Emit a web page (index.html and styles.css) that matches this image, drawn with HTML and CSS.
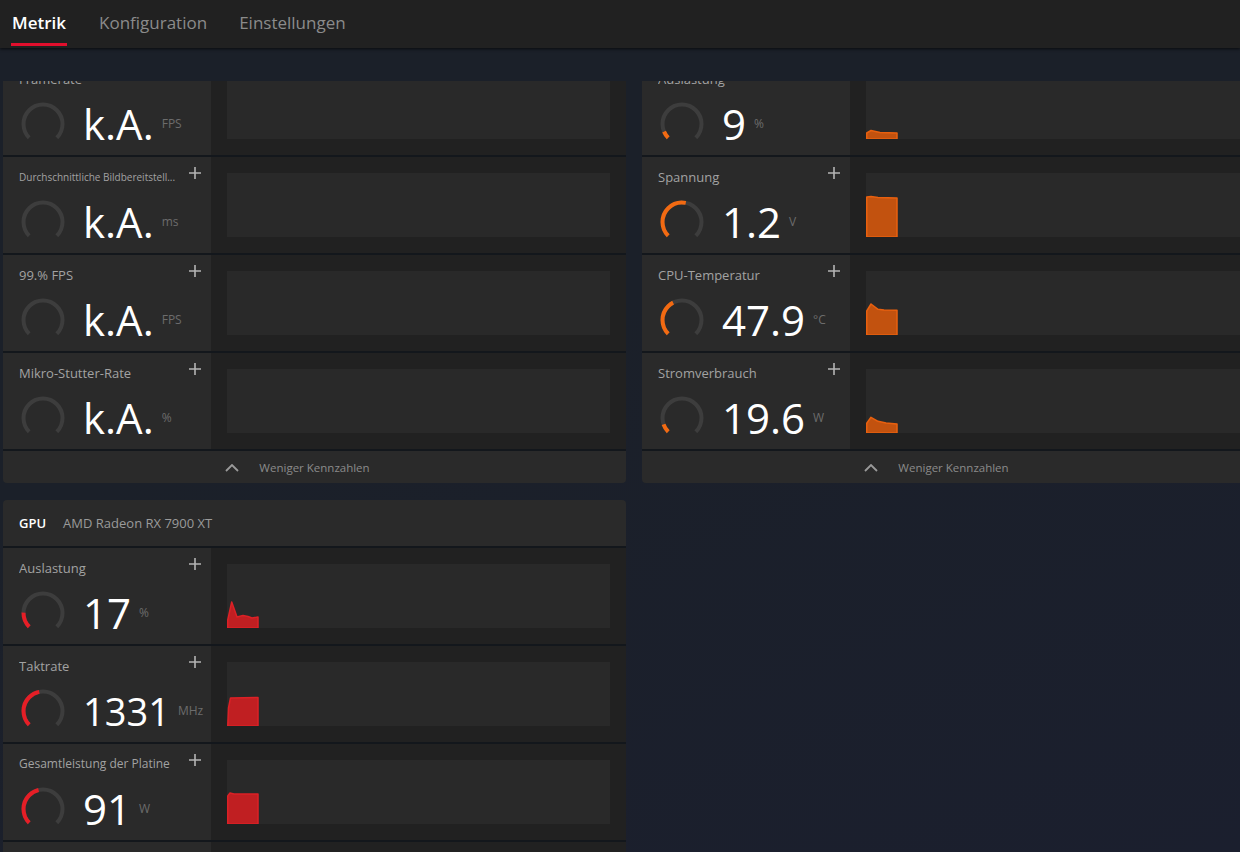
FILE: index.html
```html
<!DOCTYPE html>
<html lang="de">
<head>
<meta charset="utf-8">
<title>Metrik</title>
<link rel="stylesheet" href="styles.css">
</head>
<body>
<header class="topbar">
  <nav class="tabs">
    <a class="tab active">Metrik</a>
    <a class="tab">Konfiguration</a>
    <a class="tab">Einstellungen</a>
  </nav>
</header>

<main class="viewport">
  <div class="columns">
    <div class="col">
      <section class="panel">
        <div class="row">
          <div class="cell">
            <div class="label">Framerate</div>
            <svg class="plus" viewBox="0 0 12 12"><path d="M6 0V12M0 6H12"/></svg>
            <div class="body">
              <svg class="gauge" viewBox="0 0 44 44"><circle class="track" cx="22" cy="22" r="19.5" pathLength="360" transform="rotate(135 22 22)"/></svg>
              <span class="value">k.A.</span><span class="unit">FPS</span>
            </div>
          </div>
          <div class="chart-area"><div class="chart"></div></div>
        </div>
        <div class="row">
          <div class="cell">
            <div class="label small">Durchschnittliche Bildbereitstell...</div>
            <svg class="plus" viewBox="0 0 12 12"><path d="M6 0V12M0 6H12"/></svg>
            <div class="body">
              <svg class="gauge" viewBox="0 0 44 44"><circle class="track" cx="22" cy="22" r="19.5" pathLength="360" transform="rotate(135 22 22)"/></svg>
              <span class="value">k.A.</span><span class="unit">ms</span>
            </div>
          </div>
          <div class="chart-area"><div class="chart"></div></div>
        </div>
        <div class="row">
          <div class="cell">
            <div class="label">99.% FPS</div>
            <svg class="plus" viewBox="0 0 12 12"><path d="M6 0V12M0 6H12"/></svg>
            <div class="body">
              <svg class="gauge" viewBox="0 0 44 44"><circle class="track" cx="22" cy="22" r="19.5" pathLength="360" transform="rotate(135 22 22)"/></svg>
              <span class="value">k.A.</span><span class="unit">FPS</span>
            </div>
          </div>
          <div class="chart-area"><div class="chart"></div></div>
        </div>
        <div class="row">
          <div class="cell">
            <div class="label">Mikro-Stutter-Rate</div>
            <svg class="plus" viewBox="0 0 12 12"><path d="M6 0V12M0 6H12"/></svg>
            <div class="body">
              <svg class="gauge" viewBox="0 0 44 44"><circle class="track" cx="22" cy="22" r="19.5" pathLength="360" transform="rotate(135 22 22)"/></svg>
              <span class="value">k.A.</span><span class="unit">%</span>
            </div>
          </div>
          <div class="chart-area"><div class="chart"></div></div>
        </div>
        <div class="more">
          <span class="more-text"><svg class="chevron" viewBox="0 0 14 8"><path d="M1 7L7 1L13 7"/></svg>Weniger Kennzahlen</span>
        </div>
      </section>

      <section class="panel">
        <div class="panel-head"><span class="head-title">GPU</span><span class="head-name">AMD Radeon RX 7900 XT</span></div>
        <div class="row">
          <div class="cell">
            <div class="label">Auslastung</div>
            <svg class="plus" viewBox="0 0 12 12"><path d="M6 0V12M0 6H12"/></svg>
            <div class="body">
              <svg class="gauge red" viewBox="0 0 44 44"><circle class="track" cx="22" cy="22" r="19.5" pathLength="360" transform="rotate(135 22 22)"/><circle class="arc" cx="22" cy="22" r="19.5" pathLength="360" transform="rotate(135 22 22)" stroke-dasharray="46 360"/></svg>
              <span class="value">17</span><span class="unit">%</span>
            </div>
          </div>
          <div class="chart-area"><div class="chart"><svg class="spark red" viewBox="0 0 383 64"><path d="M0.75 64V56L4.7 38L10 53L16 51.5L21 52.5L25 54L31 53V64Z"/></svg></div></div>
        </div>
        <div class="row">
          <div class="cell">
            <div class="label">Taktrate</div>
            <svg class="plus" viewBox="0 0 12 12"><path d="M6 0V12M0 6H12"/></svg>
            <div class="body">
              <svg class="gauge red" viewBox="0 0 44 44"><circle class="track" cx="22" cy="22" r="19.5" pathLength="360" transform="rotate(135 22 22)"/><circle class="arc" cx="22" cy="22" r="19.5" pathLength="360" transform="rotate(135 22 22)" stroke-dasharray="124 360"/></svg>
              <span class="value fit">1331</span><span class="unit">MHz</span>
            </div>
          </div>
          <div class="chart-area"><div class="chart"><svg class="spark red" viewBox="0 0 383 64"><path d="M0.75 64L1.5 46L3.5 36L31 35.5V64Z"/></svg></div></div>
        </div>
        <div class="row">
          <div class="cell">
            <div class="label mid">Gesamtleistung der Platine</div>
            <svg class="plus" viewBox="0 0 12 12"><path d="M6 0V12M0 6H12"/></svg>
            <div class="body">
              <svg class="gauge red" viewBox="0 0 44 44"><circle class="track" cx="22" cy="22" r="19.5" pathLength="360" transform="rotate(135 22 22)"/><circle class="arc" cx="22" cy="22" r="19.5" pathLength="360" transform="rotate(135 22 22)" stroke-dasharray="122 360"/></svg>
              <span class="value">91</span><span class="unit">W</span>
            </div>
          </div>
          <div class="chart-area"><div class="chart"><svg class="spark red" viewBox="0 0 383 64"><path d="M0.75 64V36L3 33L7 34L31 34V64Z"/></svg></div></div>
        </div>
        <div class="row">
          <div class="cell"></div>
          <div class="chart-area"><div class="chart"></div></div>
        </div>
      </section>
    </div>

    <div class="col">
      <section class="panel">
        <div class="row">
          <div class="cell">
            <div class="label">Auslastung</div>
            <svg class="plus" viewBox="0 0 12 12"><path d="M6 0V12M0 6H12"/></svg>
            <div class="body">
              <svg class="gauge orange" viewBox="0 0 44 44"><circle class="track" cx="22" cy="22" r="19.5" pathLength="360" transform="rotate(135 22 22)"/><circle class="arc" cx="22" cy="22" r="19.5" pathLength="360" transform="rotate(135 22 22)" stroke-dasharray="22 360"/></svg>
              <span class="value">9</span><span class="unit">%</span>
            </div>
          </div>
          <div class="chart-area"><div class="chart"><svg class="spark orange" viewBox="0 0 383 64"><path d="M0.75 64V58L5 55.5L14 57.5L31 58V64Z"/></svg></div></div>
        </div>
        <div class="row">
          <div class="cell">
            <div class="label">Spannung</div>
            <svg class="plus" viewBox="0 0 12 12"><path d="M6 0V12M0 6H12"/></svg>
            <div class="body">
              <svg class="gauge orange" viewBox="0 0 44 44"><circle class="track" cx="22" cy="22" r="19.5" pathLength="360" transform="rotate(135 22 22)"/><circle class="arc" cx="22" cy="22" r="19.5" pathLength="360" transform="rotate(135 22 22)" stroke-dasharray="146 360"/></svg>
              <span class="value">1.2</span><span class="unit">V</span>
            </div>
          </div>
          <div class="chart-area"><div class="chart"><svg class="spark orange" viewBox="0 0 383 64"><path d="M0.75 64V24L5 23.5L12 24.5L31 25V64Z"/></svg></div></div>
        </div>
        <div class="row">
          <div class="cell">
            <div class="label">CPU-Temperatur</div>
            <svg class="plus" viewBox="0 0 12 12"><path d="M6 0V12M0 6H12"/></svg>
            <div class="body">
              <svg class="gauge orange" viewBox="0 0 44 44"><circle class="track" cx="22" cy="22" r="19.5" pathLength="360" transform="rotate(135 22 22)"/><circle class="arc" cx="22" cy="22" r="19.5" pathLength="360" transform="rotate(135 22 22)" stroke-dasharray="108 360"/></svg>
              <span class="value">47.9</span><span class="unit">°C</span>
            </div>
          </div>
          <div class="chart-area"><div class="chart"><svg class="spark orange" viewBox="0 0 383 64"><path d="M0.75 64V40L5 33L12 38.3L18 39L31 39.3V64Z"/></svg></div></div>
        </div>
        <div class="row">
          <div class="cell">
            <div class="label">Stromverbrauch</div>
            <svg class="plus" viewBox="0 0 12 12"><path d="M6 0V12M0 6H12"/></svg>
            <div class="body">
              <svg class="gauge orange" viewBox="0 0 44 44"><circle class="track" cx="22" cy="22" r="19.5" pathLength="360" transform="rotate(135 22 22)"/><circle class="arc" cx="22" cy="22" r="19.5" pathLength="360" transform="rotate(135 22 22)" stroke-dasharray="26 360"/></svg>
              <span class="value">19.6</span><span class="unit">W</span>
            </div>
          </div>
          <div class="chart-area"><div class="chart"><svg class="spark orange" viewBox="0 0 383 64"><path d="M0.75 64V54.3L5 48.3L12 52.3L20 54L31 55V64Z"/></svg></div></div>
        </div>
        <div class="more">
          <span class="more-text"><svg class="chevron" viewBox="0 0 14 8"><path d="M1 7L7 1L13 7"/></svg>Weniger Kennzahlen</span>
        </div>
      </section>
    </div>
  </div>
</main>
</body>
</html>
```

FILE: styles.css
```css
* {
  box-sizing: border-box;
  margin: 0;
  padding: 0;
}

html,
body {
  height: 100%;
}

body {
  font-family: "Open Sans", "Noto Sans", sans-serif;
  color: #ffffff;
  background: linear-gradient(160deg, #1b2029 0%, #1b2029 40%, #1b1f2e 100%);
  overflow: hidden;
}

/* ---------- top bar ---------- */
.topbar {
  height: 48px;
  background: #212121;
  box-shadow: 0 1px 3px rgba(0, 0, 0, 0.7);
  position: relative;
  z-index: 2;
  padding-left: 11px;
}

.tabs {
  display: flex;
  height: 100%;
}

.tab {
  position: relative;
  display: flex;
  align-items: center;
  height: 100%;
  padding: 0 1px 3px;
  margin-right: 30px;
  font-size: 17px;
  color: #8b8b8b;
  cursor: pointer;
}

.tab:first-child {
  margin-right: 31px;
}

.tab.active {
  color: #ffffff;
  font-weight: 600;
}

.tab.active::after {
  content: "";
  position: absolute;
  left: 0;
  right: 0;
  bottom: 2px;
  height: 3px;
  background: #e20f2d;
}

/* ---------- scroll viewport ---------- */
.viewport {
  margin-top: 33px;
  height: calc(100% - 81px);
  overflow: hidden;
}

.columns {
  display: flex;
  gap: 16px;
  padding-left: 3px;
  margin-top: -22px;
  width: max-content;
}

.col {
  width: 623px;
  display: flex;
  flex-direction: column;
  gap: 17px;
}

.panel {
  background: #2a2a2a;
  border-radius: 4px;
  overflow: hidden;
}

/* ---------- rows ---------- */
.row {
  display: grid;
  grid-template-columns: 208px 1fr;
  height: 98px;
  border-bottom: 2px solid #13171c;
}

.cell {
  position: relative;
  background: #2a2a2a;
  padding: 12px 0 0 16px;
}

.label {
  font-size: 13px;
  line-height: 16px;
  color: #a2a2a2;
  white-space: nowrap;
  overflow: hidden;
  text-overflow: ellipsis;
  max-width: 162px;
}

.label.small {
  font-size: 10px;
}

.label.mid {
  font-size: 12px;
}

.plus {
  position: absolute;
  top: 10px;
  right: 10px;
  width: 12px;
  height: 12px;
}

.plus path {
  stroke: #b4b4b4;
  stroke-width: 1.6;
  fill: none;
}

.body {
  display: flex;
  align-items: center;
  height: 44px;
  margin-top: 15px;
  margin-left: 2px;
}

.gauge {
  width: 44px;
  height: 44px;
  flex: none;
}

.gauge circle {
  fill: none;
  stroke-width: 4;
}

.gauge .track {
  stroke: #3d3d3d;
  stroke-dasharray: 270 360;
}

.gauge.orange .arc {
  stroke: #f26a12;
}

.gauge.red .arc {
  stroke: #e61e26;
}

.value {
  margin-left: 18px;
  font-size: 42px;
  line-height: 44px;
  color: #ffffff;
  white-space: nowrap;
}

.value.fit {
  font-size: 38px;
}

.unit {
  margin-left: 8px;
  font-size: 12px;
  line-height: 16px;
  color: #6c6c6c;
}

.chart-area {
  background: #212121;
  padding: 16px;
}

.chart {
  height: 64px;
  background: #292929;
}

.spark {
  display: block;
  width: 100%;
  height: 64px;
}

.spark path {
  stroke-width: 1.5;
  stroke-linejoin: round;
}

.spark.orange path {
  fill: #c2520f;
  stroke: #e8600f;
}

.spark.red path {
  fill: #c01f22;
  stroke: #dc2126;
}

/* ---------- footer ---------- */
.more {
  height: 32px;
  display: flex;
  align-items: center;
  justify-content: center;
}

.more-text {
  position: relative;
  font-size: 11.5px;
  color: #8a8a8a;
}

.chevron {
  position: absolute;
  left: -34px;
  top: 4px;
  width: 14px;
  height: 8px;
}

.chevron path {
  fill: none;
  stroke: #9a9a9a;
  stroke-width: 1.8;
}

/* ---------- GPU header ---------- */
.panel-head {
  height: 48px;
  border-bottom: 2px solid #13171c;
  display: flex;
  align-items: center;
  gap: 17px;
  padding-left: 16px;
  font-size: 13px;
}

.head-title {
  color: #ffffff;
  font-weight: 600;
}

.head-name {
  color: #9a9a9a;
}
```
